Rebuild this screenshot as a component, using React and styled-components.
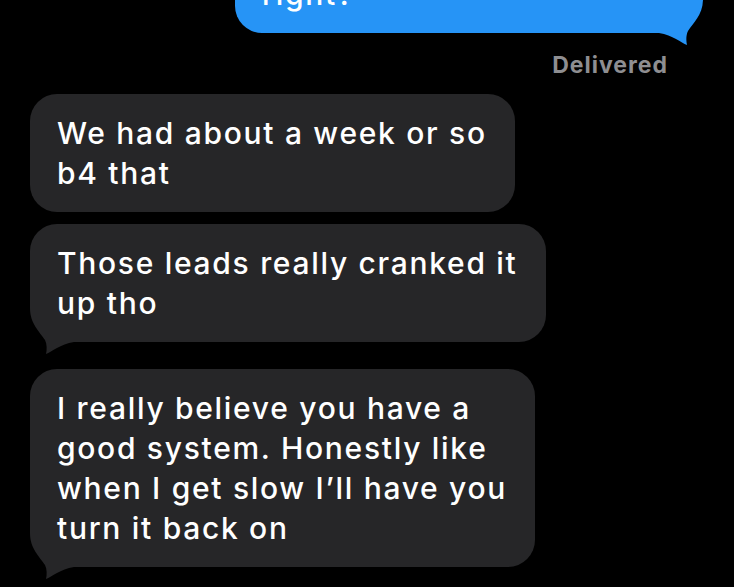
import React from "react";
import styled, { createGlobalStyle } from "styled-components";

const Global = createGlobalStyle`
  html, body { margin: 0; padding: 0; background: #000; }
  body { font-family: Inter, "Noto Sans", sans-serif; -webkit-font-smoothing: antialiased; }
`;

const Screen = styled.div`
  width: 734px;
  height: 587px;
  overflow: hidden;
  background: #000;
  display: flex;
  flex-direction: column;
  padding: 0 31px 0 30px;
  box-sizing: border-box;
`;

const Bubble = styled.div`
  position: relative;
  box-sizing: border-box;
  align-self: ${(p) => (p.$mine ? "flex-end" : "flex-start")};
  width: ${(p) => (p.$width ? `${p.$width}px` : "auto")};
  margin-top: ${(p) => p.$top}px;
  padding: 19px 28px 19px 27px;
  border-radius: 27px;
  ${(p) =>
    p.$tail
      ? p.$mine
        ? "border-bottom-right-radius: 40px;"
        : "border-bottom-left-radius: 40px;"
      : ""}
  background: ${(p) => (p.$mine ? "#2694f6" : "#262628")};
  color: #fff;
  font-family: Inter, "Noto Sans", sans-serif;
  font-weight: 500;
  font-size: 30px;
  line-height: 40px;
  letter-spacing: 1.7px;
`;

const Line = styled.span`
  position: relative;
  display: block;
  white-space: nowrap;
`;

const TailSvg = styled.svg`
  position: absolute;
  bottom: -14px;
  ${(p) => (p.$mine ? "right: 0; transform: scaleX(-1);" : "left: 0;")}
  width: 48px;
  height: 58px;
  overflow: visible;
`;

const Status = styled.div`
  align-self: flex-end;
  margin: 19px 35px 0 0;
  font-family: Inter, "Noto Sans", sans-serif;
  font-weight: 700;
  font-size: 23px;
  line-height: 26px;
  letter-spacing: 1px;
  color: #8e8e91;
`;

function Tail({ mine }) {
  return (
    <TailSvg $mine={mine} viewBox="0 0 48 58">
      <path
        d="M0,0 L0,10 C0,26 10,34 15,42 C17,46 17,52 16,56 C22,54 30,46 44,44 L48,44 L48,0 Z"
        fill={mine ? "#2694f6" : "#262628"}
      />
    </TailSvg>
  );
}

function Message({ mine, tail, top, width, lines }) {
  return (
    <Bubble $mine={mine} $tail={tail} $top={top} $width={width}>
      {tail && <Tail mine={mine} />}
      {lines.map((l, i) => (
        <Line key={i}>{l}</Line>
      ))}
    </Bubble>
  );
}

export default function App() {
  return (
    <>
      <Global />
      <Screen>
        <Message mine tail top={-45} width={468} lines={["right?"]} />
        <Status>Delivered</Status>
        <Message top={16} lines={["We had about a week or so", "b4 that"]} />
        <Message
          tail
          top={12}
          lines={["Those leads really cranked it", "up tho"]}
        />
        <Message
          tail
          top={27}
          lines={[
            "I really believe you have a",
            "good system. Honestly like",
            "when I get slow I\u2019ll have you",
            "turn it back on",
          ]}
        />
      </Screen>
    </>
  );
}
